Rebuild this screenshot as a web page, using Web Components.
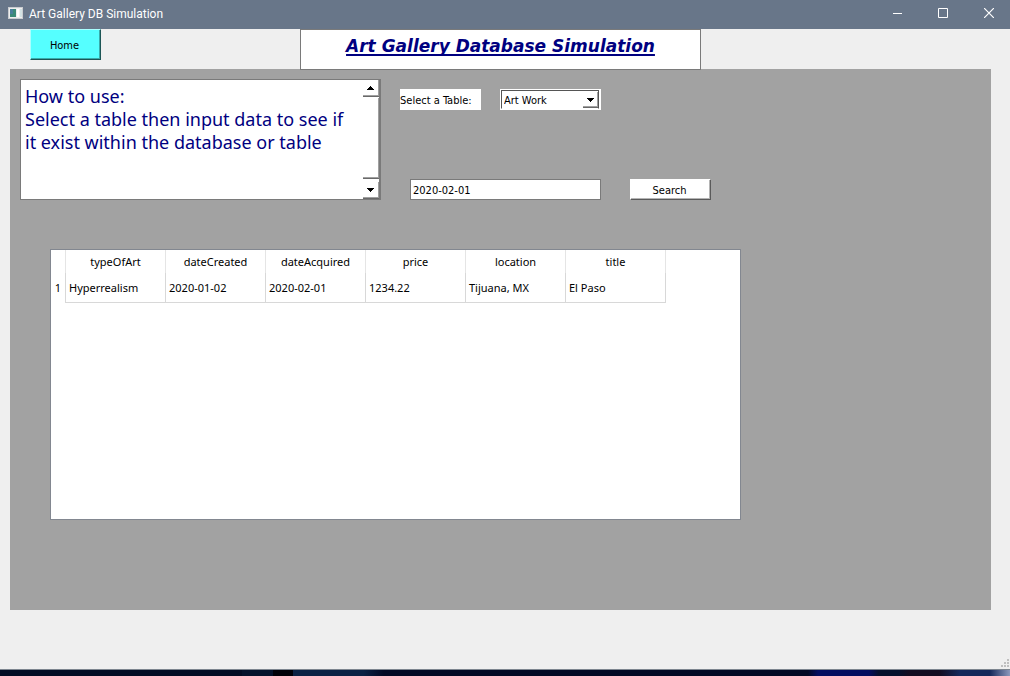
<!DOCTYPE html>
<html lang="en">
<head>
<meta charset="utf-8">
<title>Art Gallery DB Simulation</title>
<style>
  html, body { margin: 0; height: 100%; }
  body { font: 11px/13px "DejaVu Sans Condensed", "DejaVu Sans", sans-serif; color: #000;
         background: linear-gradient(90deg, #020c24 0 24%, #04122c 24% 27%, #000008 27% 29%, #0b2144 29% 36%, #020824 38% 80%, #030d60 81% 86%, #04102c 87% 89%, #120c20 90% 93%, #14285a 95% 98%, #8c98bc); }
</style>
</head>
<body>
<app-window></app-window>

<script>
const define = (name, html, setup) => {
  const template = document.createElement('template');
  template.innerHTML = `<style>*, *::before, *::after { box-sizing: border-box; } :host { box-sizing: border-box; }</style>${html}`;
  customElements.define(name, class extends HTMLElement {
    constructor() {
      super();
      this.attachShadow({ mode: 'open' }).append(template.content.cloneNode(true));
      if (setup) setup(this.shadowRoot, this);
    }
  });
};

define('title-bar', `
  <style>
    :host { display: flex; align-items: center; height: 29px; padding-left: 8px; background: #687689; color: #fff;
            font: 12px/16px Roboto, sans-serif; }
    .name { flex: 1; margin-left: 6px; padding-bottom: 2px; }
    .app { margin-bottom: 3px; }
    button { width: 46px; height: 29px; padding: 0 0 3px; border: 0; background: none; color: inherit; display: grid; place-items: center; }
    nav { display: flex; margin-right: -2px; }
  </style>
  <svg class="app" width="15" height="12" viewBox="0 0 15 12" aria-hidden="true">
    <rect width="15" height="12" fill="#c9ccd0"/><rect x="1" y="1" width="13" height="10" fill="#eee"/>
    <rect x="2" y="2" width="6" height="8" fill="#3c8a78"/><rect x="2" y="2" width="3" height="5" fill="#4a7f9c"/>
    <rect x="9" y="2" width="2" height="8" fill="#fff"/><rect x="12" y="2" width="2" height="8" fill="#d3e2e4"/>
  </svg>
  <span class="name"><slot></slot></span>
  <nav aria-label="Window">
    <button aria-label="Minimize"><svg width="10" height="10"><path d="M1 5.500h9" stroke="#fff"/></svg></button>
    <button aria-label="Maximize"><svg width="10" height="10"><path d="M.5.5h9v9h-9z" fill="none" stroke="#fff"/></svg></button>
    <button aria-label="Close"><svg width="10" height="10"><path d="M0 0l10 10M10 0L0 10" stroke="#fff" stroke-width="1.200"/></svg></button>
  </nav>`);

define('push-button', `
  <style>
    :host { display: block; width: 81px; height: 21px; }
    button { width: 100%; height: 100%; padding: 2px 2px 0 0; background: var(--face, #fff); color: inherit; font: inherit;
             border: 1px solid; border-color: var(--light, #fff) var(--dark, #5a5a5a) var(--dark, #5a5a5a) var(--light, #fff);
             box-shadow: inset -1px -1px var(--shade, #b4b4b4); }
  </style>
  <button type="button"><slot></slot></button>`);

define('page-header', `
  <style>
    :host { display: grid; grid-template-columns: 1fr auto 1fr; align-items: start; padding: 0 19px 0 10px; height: 40px; }
    push-button { --face: #55ffff; --light: #aaffff; --dark: #1c5555; --shade: #38aaaa; width: 71px; height: 31px; margin-left: 20px; }
    h1 { position: relative; margin: 0; width: 401px; height: 41px; padding-top: 4px; border: 1px solid #7a7a7a; background: #fff; color: #000080;
         text-align: center; font: italic bold 17px/24px "DejaVu Sans", sans-serif;
         text-decoration: underline 2px; text-underline-offset: 2px; text-decoration-skip-ink: none; }
  </style>
  <push-button>Home</push-button>
  <h1><slot></slot></h1>`);

define('help-box', `
  <style>
    :host { display: flex; width: 361px; height: 121px; border: 1px solid #7a7a7a; border-right-width: 2px; background: #fff; }
    .text { flex: 1; padding: 5px 4px; color: #000080; font: 18px/23px "Noto Sans", sans-serif; }
    .bar { display: flex; flex-direction: column; width: 16px; }
    button, .thumb { padding: 0; background: #fff; border: 0 solid #696969; border-bottom-width: 1px; box-shadow: inset -1px -1px #a0a0a0; }
    button { height: 17px; padding-right: 2px; display: grid; place-items: center; }
    .thumb { flex: 1; margin: 1px 0 3px; }
  </style>
  <div class="text"><slot></slot></div>
  <div class="bar">
    <button type="button" aria-label="Scroll up"><svg width="7" height="4" shape-rendering="crispEdges"><path d="M3 0h1v1h1v1h1v1h1v1H0V3h1V2h1V1h1z"/></svg></button>
    <div class="thumb"></div>
    <button type="button" aria-label="Scroll down"><svg width="7" height="4" shape-rendering="crispEdges"><path d="M0 0h7v1H6v1H5v1H4v1H3V3H2V2H1V1H0z"/></svg></button>
  </div>`);

define('search-form', `
  <style>
    :host { display: block; }
    form { display: flex; flex-direction: column; gap: 69px; padding-top: 10px; }
    .row { display: flex; height: 21px; }
    label { width: 81px; margin-right: 19px; background: #fff; line-height: 23px; white-space: nowrap; }
    .pick { position: relative; width: 101px; border: 1px solid #fff; background: #fff; }
    select { appearance: none; display: block; width: 98px; height: 19px; padding: 2px 0 0 2px; border: 1px solid #555; border-bottom-color: #fff;
             border-radius: 0; background: #fff; color: inherit; font: inherit; }
    .arrow { position: absolute; right: 2px; top: 2px; width: 15px; height: 16px; display: grid; place-items: center; pointer-events: none;
             border: solid #696969; border-width: 0 0 1px; box-shadow: inset -1px -1px #a0a0a0; }
    .second { margin-left: 10px; gap: 29px; }
    input { width: 191px; padding: 2px 2px 0; border: 1px solid #7a7a7a; background: #fff; color: inherit; font: inherit; }
  </style>
  <form>
    <div class="row">
      <label for="table">Select a Table:</label>
      <div class="pick">
        <select id="table"><option>Art Work</option></select>
        <span class="arrow"><svg width="7" height="4" shape-rendering="crispEdges"><path d="M0 0h7v1H6v1H5v1H4v1H3V3H2V2H1V1H0z"/></svg></span>
      </div>
    </div>
    <div class="row second">
      <input type="text" value="2020-02-01" aria-label="Search value">
      <push-button>Search</push-button>
    </div>
  </form>`);

define('result-table', `
  <style>
    :host { display: block; width: 691px; max-width: 100%; border: 1px solid #828790; background: #fff;
            font: 11px/16px "Noto Sans", sans-serif; }
    table { border-collapse: separate; border-spacing: 0; table-layout: fixed; width: 615px; }
    th, td { font-weight: normal; padding: 0; white-space: nowrap; }
    col.index { width: 15px; }
    thead th { height: 23px; text-align: center; border-right: 1px solid #e5e5e5; }
    tbody th { border-right: 1px solid #d8d8d8; text-align: center; }
    td { height: 30px; padding: 0 3px; border: solid #d8d8d8; border-width: 0 1px 1px 0; text-align: left; }
  </style>
  <table>
    <colgroup><col class="index"><col span="6"></colgroup>
    <thead><tr></tr></thead>
    <tbody></tbody>
  </table>`, (root) => {
  const columns = ['typeOfArt', 'dateCreated', 'dateAcquired', 'price', 'location', 'title'];
  const rows = [['Hyperrealism', '2020-01-02', '2020-02-01', '1234.22', 'Tijuana, MX', 'El Paso']];
  root.querySelector('thead tr').innerHTML = '<th></th>' + columns.map(c => `<th scope="col">${c}</th>`).join('');
  root.querySelector('tbody').innerHTML = rows.map((r, i) =>
    `<tr><th scope="row">${i + 1}</th>${r.map(v => `<td>${v}</td>`).join('')}</tr>`).join('');
});

define('app-window', `
  <style>
    :host { display: flex; flex-direction: column; min-height: calc(100vh - 6px); background: #efefef; border-bottom: 1px solid #7d858f; }
    main { flex: 1; display: flex; flex-direction: column; margin: 0 19px 0 10px; padding: 10px 10px 90px; background: #a2a2a2; }
    .top { display: flex; gap: 19px; }
    result-table { flex: 1; margin: 49px 0 0 30px; }
    footer { display: flex; justify-content: flex-end; align-items: flex-end; height: 59px; padding: 0 1px 2px 0; }
  </style>
  <title-bar>Art Gallery DB Simulation</title-bar>
  <page-header>Art Gallery Database Simulation</page-header>
  <main>
    <div class="top">
      <help-box>How to use:<br>Select a table then input data to see if it exist within the database or table</help-box>
      <search-form></search-form>
    </div>
    <result-table></result-table>
  </main>
  <footer>
    <svg width="8" height="8" fill="#bfbfbf" aria-hidden="true"><path d="M6 0h2v2H6zM3 3h2v2H3zM6 3h2v2H6zM0 6h2v2H0zM3 6h2v2H3zM6 6h2v2H6z"/></svg>
  </footer>`);
</script>
</body>
</html>
